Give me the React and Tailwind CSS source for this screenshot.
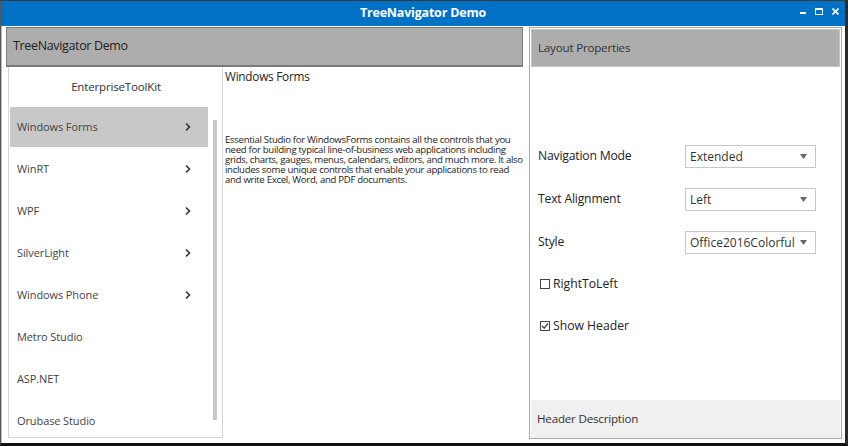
const ITEMS = [
  { label: 'Windows Forms', arrow: true, selected: true },
  { label: 'WinRT', arrow: true },
  { label: 'WPF', arrow: true },
  { label: 'SilverLight', arrow: true },
  { label: 'Windows Phone', arrow: true },
  { label: 'Metro Studio' },
  { label: 'ASP.NET' },
  { label: 'Orubase Studio' },
]

function Chevron() {
  return (
    <svg width="8" height="10" viewBox="0 0 8 10">
      <path d="M2 1.5 L5.5 5 L2 8.5" fill="none" stroke="#333" strokeWidth="1.6" />
    </svg>
  )
}

function Select({ value }) {
  return (
    <div className="w-[131px] h-[23px] border border-[#c8c8c8] bg-white flex items-center justify-between pl-[4px] pr-[8px] text-[12px] text-[#333]">
      <span>{value}</span>
      <svg width="7" height="5" viewBox="0 0 7 5">
        <path d="M0 0 L7 0 L3.5 5 Z" fill="#666" />
      </svg>
    </div>
  )
}

function Check({ checked, label }) {
  return (
    <div className="flex items-center gap-[3px] h-[16px] text-[12.2px] text-[#222]">
      <div className="w-[10px] h-[10px] border border-[#444] flex items-center justify-center">
        {checked && (
          <svg width="8" height="8" viewBox="0 0 8 8">
            <path d="M1 4 L3.2 6.2 L7 1.5" fill="none" stroke="#333" strokeWidth="1.2" />
          </svg>
        )}
      </div>
      <span>{label}</span>
    </div>
  )
}

export default function App() {
  return (
    <div
      className="w-[848px] h-[446px] flex flex-col bg-[#2b2b2b] border-t border-[#3a3a3a] border-l border-l-[#555] border-r-[3px] border-r-[#2b2b2b] border-b-[3px] border-b-[#111] overflow-hidden"
      style={{ fontFamily: '"Open Sans", "Noto Sans", sans-serif' }}
    >
      {/* Title bar */}
      <div className="relative h-[25px] bg-[#0072c6] flex items-center justify-center shrink-0">
        <span className="text-white font-bold text-[12.5px] tracking-[-0.2px]">TreeNavigator Demo</span>
        <div className="absolute right-[6px] top-[7px] flex items-center gap-[9px] text-white">
          <div className="w-[6px] h-[2px] bg-white mt-[3px]" />
          <div className="w-[8px] h-[7px] border border-white border-t-2" />
          <svg width="7" height="7" viewBox="0 0 7 7">
            <path d="M0.5 0.5 L6.5 6.5 M6.5 0.5 L0.5 6.5" stroke="white" strokeWidth="1.6" />
          </svg>
        </div>
      </div>

      {/* Body */}
      <div className="flex-1 bg-white flex pt-[1px] pl-[4px] border-l border-[#bbb]">
        {/* Left column */}
        <div className="w-[517px] flex flex-col">
          <div className="h-[40px] shrink-0 bg-[#adadad] border border-[#7a7a7a] border-b-2 flex items-center pl-[6px] text-[12.5px] text-[#222] tracking-[-0.35px]">
            TreeNavigator Demo
          </div>
          <div className="flex">
            <div className="ml-[2px] w-[215px] h-[371px] border border-t-0 border-[#d6d6d6] flex flex-col pl-[1px] overflow-hidden">
              <div className="h-[40px] shrink-0 flex items-center justify-center text-[11.6px] text-[#333] tracking-[-0.2px]">
                EnterpriseToolKit
              </div>
              <div className="flex relative">
                <div className="w-[198px] flex flex-col">
                  {ITEMS.map(({ label, arrow, selected }) => (
                    <div
                      key={label}
                      className={`shrink-0 flex items-center justify-between pl-[7px] pr-[16px] text-[11px] text-[#444] tracking-[-0.1px] ${
                        selected ? 'bg-[#c8c8c8] h-[40px] mb-[1px]' : 'h-[42px]'
                      }`}
                    >
                      <span>{label}</span>
                      {arrow && <Chevron />}
                    </div>
                  ))}
                </div>
                <div className="ml-[5px] mt-[13px] w-[4px] h-[300px] bg-[#c8c8c8]" />
              </div>
            </div>
            <div className="flex-1 pl-[2px] pt-[1px]">
              <div className="text-[11.8px] text-[#222] tracking-[-0.25px]">Windows Forms</div>
              <p className="mt-[49px] text-[9.6px] leading-[10px] text-[#222] tracking-[-0.3px]">
                Essential Studio for WindowsForms contains all the controls that you need for building typical line-of-business web applications including grids, charts, gauges, menus, calendars, editors, and much more. It also includes some unique controls that enable your applications to read and write Excel, Word, and PDF documents.
              </p>
            </div>
          </div>
        </div>

        {/* Right column */}
        <div className="ml-[6px] w-[313px] h-[412px] border border-[#a8a8a8] flex flex-col">
          <div className="m-[1px] h-[38px] shrink-0 bg-[#adadad] border border-[#c4c4c4] flex items-center pl-[6px] text-[11.6px] text-[#333] tracking-[-0.2px]">
            Layout Properties
          </div>
          <div className="flex-1 flex flex-col pl-[8px] pt-[77px]">
            <div className="flex items-center h-[23px]">
              <span className="w-[147px] text-[12.2px] text-[#222] tracking-[-0.2px]">Navigation Mode</span>
              <Select value="Extended" />
            </div>
            <div className="flex items-center h-[23px] mt-[20px]">
              <span className="w-[147px] text-[12.2px] text-[#222] tracking-[-0.2px]">Text Alignment</span>
              <Select value="Left" />
            </div>
            <div className="flex items-center h-[23px] mt-[20px]">
              <span className="w-[147px] text-[12.2px] text-[#222] tracking-[-0.2px]">Style</span>
              <Select value="Office2016Colorful" />
            </div>
            <div className="mt-[22px] pl-[2px]">
              <Check label="RightToLeft" />
            </div>
            <div className="mt-[26px] pl-[2px]">
              <Check checked label="Show Header" />
            </div>
          </div>
          <div className="mx-[1px] h-[38px] shrink-0 bg-[#f0f0f0] flex items-center pl-[6px] text-[11.6px] text-[#333] tracking-[-0.2px]">
            Header Description
          </div>
        </div>
      </div>
    </div>
  )
}
